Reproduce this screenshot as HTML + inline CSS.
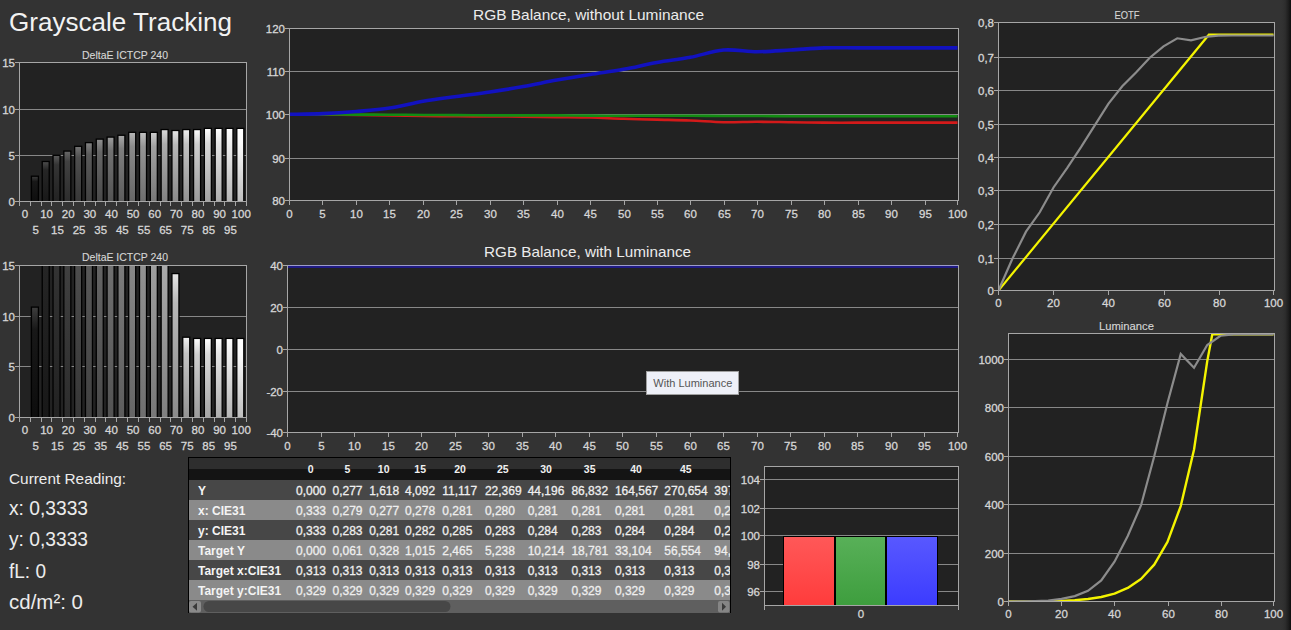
<!DOCTYPE html><html><head><meta charset="utf-8"><title>Grayscale Tracking</title><style>html,body{margin:0;padding:0;background:#333333;width:1291px;height:630px;overflow:hidden}svg{display:block}text{font-family:"Liberation Sans",sans-serif}</style></head><body>
<svg width="1291" height="630" viewBox="0 0 1291 630">
<defs>
<linearGradient id="edge" x1="0" x2="1" y1="0" y2="0"><stop offset="0" stop-color="#333333" stop-opacity="0"/><stop offset="0.5" stop-color="#2c2c2c"/><stop offset="0.8" stop-color="#1c1c1c"/><stop offset="1" stop-color="#0e0e0e"/></linearGradient>
<linearGradient id="gR" x1="0" x2="0" y1="0" y2="1"><stop offset="0" stop-color="#ff5858"/><stop offset="1" stop-color="#ff3c3c"/></linearGradient>
<linearGradient id="gG" x1="0" x2="0" y1="0" y2="1"><stop offset="0" stop-color="#58b058"/><stop offset="1" stop-color="#3e9e3e"/></linearGradient>
<linearGradient id="gB" x1="0" x2="0" y1="0" y2="1"><stop offset="0" stop-color="#5858ff"/><stop offset="1" stop-color="#3c3cff"/></linearGradient>
<linearGradient id="lv0" x1="0" x2="0" y1="0" y2="1"><stop offset="0" stop-color="rgb(45,45,45)"/><stop offset="0.2" stop-color="rgb(8,8,8)"/><stop offset="1" stop-color="rgb(0,0,0)"/></linearGradient>
<linearGradient id="lv5" x1="0" x2="0" y1="0" y2="1"><stop offset="0" stop-color="rgb(62,62,62)"/><stop offset="0.2" stop-color="rgb(24,24,24)"/><stop offset="1" stop-color="rgb(13,13,13)"/></linearGradient>
<linearGradient id="lv10" x1="0" x2="0" y1="0" y2="1"><stop offset="0" stop-color="rgb(77,77,77)"/><stop offset="0.2" stop-color="rgb(38,38,38)"/><stop offset="1" stop-color="rgb(24,24,24)"/></linearGradient>
<linearGradient id="lv15" x1="0" x2="0" y1="0" y2="1"><stop offset="0" stop-color="rgb(91,91,91)"/><stop offset="0.2" stop-color="rgb(52,52,52)"/><stop offset="1" stop-color="rgb(34,34,34)"/></linearGradient>
<linearGradient id="lv20" x1="0" x2="0" y1="0" y2="1"><stop offset="0" stop-color="rgb(105,105,105)"/><stop offset="0.2" stop-color="rgb(65,65,65)"/><stop offset="1" stop-color="rgb(44,44,44)"/></linearGradient>
<linearGradient id="lv25" x1="0" x2="0" y1="0" y2="1"><stop offset="0" stop-color="rgb(118,118,118)"/><stop offset="0.2" stop-color="rgb(78,78,78)"/><stop offset="1" stop-color="rgb(54,54,54)"/></linearGradient>
<linearGradient id="lv30" x1="0" x2="0" y1="0" y2="1"><stop offset="0" stop-color="rgb(131,131,131)"/><stop offset="0.2" stop-color="rgb(90,90,90)"/><stop offset="1" stop-color="rgb(64,64,64)"/></linearGradient>
<linearGradient id="lv35" x1="0" x2="0" y1="0" y2="1"><stop offset="0" stop-color="rgb(144,144,144)"/><stop offset="0.2" stop-color="rgb(102,102,102)"/><stop offset="1" stop-color="rgb(73,73,73)"/></linearGradient>
<linearGradient id="lv40" x1="0" x2="0" y1="0" y2="1"><stop offset="0" stop-color="rgb(157,157,157)"/><stop offset="0.2" stop-color="rgb(114,114,114)"/><stop offset="1" stop-color="rgb(83,83,83)"/></linearGradient>
<linearGradient id="lv45" x1="0" x2="0" y1="0" y2="1"><stop offset="0" stop-color="rgb(169,169,169)"/><stop offset="0.2" stop-color="rgb(126,126,126)"/><stop offset="1" stop-color="rgb(92,92,92)"/></linearGradient>
<linearGradient id="lv50" x1="0" x2="0" y1="0" y2="1"><stop offset="0" stop-color="rgb(182,182,182)"/><stop offset="0.2" stop-color="rgb(138,138,138)"/><stop offset="1" stop-color="rgb(101,101,101)"/></linearGradient>
<linearGradient id="lv55" x1="0" x2="0" y1="0" y2="1"><stop offset="0" stop-color="rgb(194,194,194)"/><stop offset="0.2" stop-color="rgb(149,149,149)"/><stop offset="1" stop-color="rgb(110,110,110)"/></linearGradient>
<linearGradient id="lv60" x1="0" x2="0" y1="0" y2="1"><stop offset="0" stop-color="rgb(206,206,206)"/><stop offset="0.2" stop-color="rgb(161,161,161)"/><stop offset="1" stop-color="rgb(119,119,119)"/></linearGradient>
<linearGradient id="lv65" x1="0" x2="0" y1="0" y2="1"><stop offset="0" stop-color="rgb(218,218,218)"/><stop offset="0.2" stop-color="rgb(172,172,172)"/><stop offset="1" stop-color="rgb(128,128,128)"/></linearGradient>
<linearGradient id="lv70" x1="0" x2="0" y1="0" y2="1"><stop offset="0" stop-color="rgb(230,230,230)"/><stop offset="0.2" stop-color="rgb(184,184,184)"/><stop offset="1" stop-color="rgb(137,137,137)"/></linearGradient>
<linearGradient id="lv75" x1="0" x2="0" y1="0" y2="1"><stop offset="0" stop-color="rgb(242,242,242)"/><stop offset="0.2" stop-color="rgb(195,195,195)"/><stop offset="1" stop-color="rgb(146,146,146)"/></linearGradient>
<linearGradient id="lv80" x1="0" x2="0" y1="0" y2="1"><stop offset="0" stop-color="rgb(254,254,254)"/><stop offset="0.2" stop-color="rgb(206,206,206)"/><stop offset="1" stop-color="rgb(154,154,154)"/></linearGradient>
<linearGradient id="lv85" x1="0" x2="0" y1="0" y2="1"><stop offset="0" stop-color="rgb(255,255,255)"/><stop offset="0.2" stop-color="rgb(217,217,217)"/><stop offset="1" stop-color="rgb(163,163,163)"/></linearGradient>
<linearGradient id="lv90" x1="0" x2="0" y1="0" y2="1"><stop offset="0" stop-color="rgb(255,255,255)"/><stop offset="0.2" stop-color="rgb(228,228,228)"/><stop offset="1" stop-color="rgb(172,172,172)"/></linearGradient>
<linearGradient id="lv95" x1="0" x2="0" y1="0" y2="1"><stop offset="0" stop-color="rgb(255,255,255)"/><stop offset="0.2" stop-color="rgb(239,239,239)"/><stop offset="1" stop-color="rgb(180,180,180)"/></linearGradient>
<linearGradient id="lv100" x1="0" x2="0" y1="0" y2="1"><stop offset="0" stop-color="rgb(255,255,255)"/><stop offset="0.2" stop-color="rgb(250,250,250)"/><stop offset="1" stop-color="rgb(189,189,189)"/></linearGradient>
</defs>
<rect x="0" y="0" width="1291" height="630" fill="#333333"/>
<rect x="1280" y="0" width="11" height="630" fill="url(#edge)"/>
<text x="9.00" y="31.00" font-size="26" text-anchor="start" fill="#f2f2f2" stroke="#f2f2f2" stroke-width="0.0" font-weight="normal" textLength="223" lengthAdjust="spacingAndGlyphs">Grayscale Tracking</text>
<rect x="19" y="62" width="228" height="140" fill="#222222"/>
<rect x="19" y="155" width="227" height="1" fill="#888888"/>
<rect x="19" y="109" width="227" height="1" fill="#888888"/>
<clipPath id="cd1"><rect x="20" y="63" width="226" height="138"/></clipPath>
<g clip-path="url(#cd1)">
<rect x="31.41" y="176.20" width="7.0" height="26.80" fill="url(#lv5)" stroke="#000" stroke-width="1.3"/>
<rect x="42.22" y="161.48" width="7.0" height="41.52" fill="url(#lv10)" stroke="#000" stroke-width="1.3"/>
<rect x="53.03" y="155.32" width="7.0" height="47.68" fill="url(#lv15)" stroke="#000" stroke-width="1.3"/>
<rect x="63.84" y="151.08" width="7.0" height="51.92" fill="url(#lv20)" stroke="#000" stroke-width="1.3"/>
<rect x="74.65" y="146.30" width="7.0" height="56.70" fill="url(#lv25)" stroke="#000" stroke-width="1.3"/>
<rect x="85.46" y="142.62" width="7.0" height="60.38" fill="url(#lv30)" stroke="#000" stroke-width="1.3"/>
<rect x="96.27" y="139.12" width="7.0" height="63.88" fill="url(#lv35)" stroke="#000" stroke-width="1.3"/>
<rect x="107.08" y="137.10" width="7.0" height="65.90" fill="url(#lv40)" stroke="#000" stroke-width="1.3"/>
<rect x="117.89" y="135.26" width="7.0" height="67.74" fill="url(#lv45)" stroke="#000" stroke-width="1.3"/>
<rect x="128.70" y="132.32" width="7.0" height="70.68" fill="url(#lv50)" stroke="#000" stroke-width="1.3"/>
<rect x="139.51" y="132.32" width="7.0" height="70.68" fill="url(#lv55)" stroke="#000" stroke-width="1.3"/>
<rect x="150.32" y="132.32" width="7.0" height="70.68" fill="url(#lv60)" stroke="#000" stroke-width="1.3"/>
<rect x="161.13" y="129.56" width="7.0" height="73.44" fill="url(#lv65)" stroke="#000" stroke-width="1.3"/>
<rect x="171.94" y="130.48" width="7.0" height="72.52" fill="url(#lv70)" stroke="#000" stroke-width="1.3"/>
<rect x="182.75" y="129.56" width="7.0" height="73.44" fill="url(#lv75)" stroke="#000" stroke-width="1.3"/>
<rect x="193.56" y="129.56" width="7.0" height="73.44" fill="url(#lv80)" stroke="#000" stroke-width="1.3"/>
<rect x="204.37" y="128.36" width="7.0" height="74.64" fill="url(#lv85)" stroke="#000" stroke-width="1.3"/>
<rect x="215.18" y="128.36" width="7.0" height="74.64" fill="url(#lv90)" stroke="#000" stroke-width="1.3"/>
<rect x="225.99" y="128.36" width="7.0" height="74.64" fill="url(#lv95)" stroke="#000" stroke-width="1.3"/>
<rect x="236.80" y="128.36" width="7.0" height="74.64" fill="url(#lv100)" stroke="#000" stroke-width="1.3"/>
</g>
<rect x="19" y="62" width="228" height="1" fill="#a6a6a6"/>
<rect x="19" y="201" width="228" height="1" fill="#a6a6a6"/>
<rect x="19" y="62" width="1" height="140" fill="#a6a6a6"/>
<rect x="246" y="62" width="1" height="140" fill="#a6a6a6"/>
<rect x="15" y="201" width="4" height="1" fill="#a6a6a6"/>
<text x="15.00" y="205.80" font-size="11.5" text-anchor="end" fill="#d6d6d6" stroke="#d6d6d6" stroke-width="0.3" font-weight="normal" >0</text>
<rect x="15" y="155" width="4" height="1" fill="#a6a6a6"/>
<text x="15.00" y="159.80" font-size="11.5" text-anchor="end" fill="#d6d6d6" stroke="#d6d6d6" stroke-width="0.3" font-weight="normal" >5</text>
<rect x="15" y="109" width="4" height="1" fill="#a6a6a6"/>
<text x="15.00" y="113.80" font-size="11.5" text-anchor="end" fill="#d6d6d6" stroke="#d6d6d6" stroke-width="0.3" font-weight="normal" >10</text>
<rect x="15" y="62" width="4" height="1" fill="#a6a6a6"/>
<text x="15.00" y="66.80" font-size="11.5" text-anchor="end" fill="#d6d6d6" stroke="#d6d6d6" stroke-width="0.3" font-weight="normal" >15</text>
<rect x="19" y="201" width="1" height="5" fill="#a6a6a6"/>
<rect x="30" y="201" width="1" height="5" fill="#a6a6a6"/>
<rect x="41" y="201" width="1" height="5" fill="#a6a6a6"/>
<rect x="51" y="201" width="1" height="5" fill="#a6a6a6"/>
<rect x="62" y="201" width="1" height="5" fill="#a6a6a6"/>
<rect x="73" y="201" width="1" height="5" fill="#a6a6a6"/>
<rect x="84" y="201" width="1" height="5" fill="#a6a6a6"/>
<rect x="95" y="201" width="1" height="5" fill="#a6a6a6"/>
<rect x="105" y="201" width="1" height="5" fill="#a6a6a6"/>
<rect x="116" y="201" width="1" height="5" fill="#a6a6a6"/>
<rect x="127" y="201" width="1" height="5" fill="#a6a6a6"/>
<rect x="138" y="201" width="1" height="5" fill="#a6a6a6"/>
<rect x="149" y="201" width="1" height="5" fill="#a6a6a6"/>
<rect x="160" y="201" width="1" height="5" fill="#a6a6a6"/>
<rect x="170" y="201" width="1" height="5" fill="#a6a6a6"/>
<rect x="181" y="201" width="1" height="5" fill="#a6a6a6"/>
<rect x="192" y="201" width="1" height="5" fill="#a6a6a6"/>
<rect x="203" y="201" width="1" height="5" fill="#a6a6a6"/>
<rect x="214" y="201" width="1" height="5" fill="#a6a6a6"/>
<rect x="224" y="201" width="1" height="5" fill="#a6a6a6"/>
<rect x="235" y="201" width="1" height="5" fill="#a6a6a6"/>
<rect x="246" y="201" width="1" height="5" fill="#a6a6a6"/>
<text x="25.00" y="218.00" font-size="11.5" text-anchor="middle" fill="#d6d6d6" stroke="#d6d6d6" stroke-width="0.3" font-weight="normal" >0</text>
<text x="35.81" y="234.00" font-size="11.5" text-anchor="middle" fill="#d6d6d6" stroke="#d6d6d6" stroke-width="0.3" font-weight="normal" >5</text>
<text x="46.62" y="218.00" font-size="11.5" text-anchor="middle" fill="#d6d6d6" stroke="#d6d6d6" stroke-width="0.3" font-weight="normal" >10</text>
<text x="57.43" y="234.00" font-size="11.5" text-anchor="middle" fill="#d6d6d6" stroke="#d6d6d6" stroke-width="0.3" font-weight="normal" >15</text>
<text x="68.24" y="218.00" font-size="11.5" text-anchor="middle" fill="#d6d6d6" stroke="#d6d6d6" stroke-width="0.3" font-weight="normal" >20</text>
<text x="79.05" y="234.00" font-size="11.5" text-anchor="middle" fill="#d6d6d6" stroke="#d6d6d6" stroke-width="0.3" font-weight="normal" >25</text>
<text x="89.86" y="218.00" font-size="11.5" text-anchor="middle" fill="#d6d6d6" stroke="#d6d6d6" stroke-width="0.3" font-weight="normal" >30</text>
<text x="100.67" y="234.00" font-size="11.5" text-anchor="middle" fill="#d6d6d6" stroke="#d6d6d6" stroke-width="0.3" font-weight="normal" >35</text>
<text x="111.48" y="218.00" font-size="11.5" text-anchor="middle" fill="#d6d6d6" stroke="#d6d6d6" stroke-width="0.3" font-weight="normal" >40</text>
<text x="122.29" y="234.00" font-size="11.5" text-anchor="middle" fill="#d6d6d6" stroke="#d6d6d6" stroke-width="0.3" font-weight="normal" >45</text>
<text x="133.10" y="218.00" font-size="11.5" text-anchor="middle" fill="#d6d6d6" stroke="#d6d6d6" stroke-width="0.3" font-weight="normal" >50</text>
<text x="143.91" y="234.00" font-size="11.5" text-anchor="middle" fill="#d6d6d6" stroke="#d6d6d6" stroke-width="0.3" font-weight="normal" >55</text>
<text x="154.72" y="218.00" font-size="11.5" text-anchor="middle" fill="#d6d6d6" stroke="#d6d6d6" stroke-width="0.3" font-weight="normal" >60</text>
<text x="165.53" y="234.00" font-size="11.5" text-anchor="middle" fill="#d6d6d6" stroke="#d6d6d6" stroke-width="0.3" font-weight="normal" >65</text>
<text x="176.34" y="218.00" font-size="11.5" text-anchor="middle" fill="#d6d6d6" stroke="#d6d6d6" stroke-width="0.3" font-weight="normal" >70</text>
<text x="187.15" y="234.00" font-size="11.5" text-anchor="middle" fill="#d6d6d6" stroke="#d6d6d6" stroke-width="0.3" font-weight="normal" >75</text>
<text x="197.96" y="218.00" font-size="11.5" text-anchor="middle" fill="#d6d6d6" stroke="#d6d6d6" stroke-width="0.3" font-weight="normal" >80</text>
<text x="208.77" y="234.00" font-size="11.5" text-anchor="middle" fill="#d6d6d6" stroke="#d6d6d6" stroke-width="0.3" font-weight="normal" >85</text>
<text x="219.58" y="218.00" font-size="11.5" text-anchor="middle" fill="#d6d6d6" stroke="#d6d6d6" stroke-width="0.3" font-weight="normal" >90</text>
<text x="230.39" y="234.00" font-size="11.5" text-anchor="middle" fill="#d6d6d6" stroke="#d6d6d6" stroke-width="0.3" font-weight="normal" >95</text>
<text x="241.20" y="218.00" font-size="11.5" text-anchor="middle" fill="#d6d6d6" stroke="#d6d6d6" stroke-width="0.3" font-weight="normal" >100</text>
<text x="125.00" y="59.00" font-size="11" text-anchor="middle" fill="#d6d6d6" stroke="#d6d6d6" stroke-width="0.12" font-weight="normal" textLength="86" lengthAdjust="spacingAndGlyphs">DeltaE ICTCP 240</text>
<rect x="19" y="265" width="228" height="153" fill="#222222"/>
<rect x="19" y="366" width="227" height="1" fill="#888888"/>
<rect x="19" y="316" width="227" height="1" fill="#888888"/>
<clipPath id="cd2"><rect x="20" y="266" width="226" height="151"/></clipPath>
<g clip-path="url(#cd2)">
<rect x="31.41" y="307.11" width="7.0" height="111.89" fill="url(#lv5)" stroke="#000" stroke-width="1.3"/>
<rect x="42.22" y="215.50" width="7.0" height="203.50" fill="url(#lv10)" stroke="#000" stroke-width="1.3"/>
<rect x="53.03" y="215.50" width="7.0" height="203.50" fill="url(#lv15)" stroke="#000" stroke-width="1.3"/>
<rect x="63.84" y="215.50" width="7.0" height="203.50" fill="url(#lv20)" stroke="#000" stroke-width="1.3"/>
<rect x="74.65" y="215.50" width="7.0" height="203.50" fill="url(#lv25)" stroke="#000" stroke-width="1.3"/>
<rect x="85.46" y="215.50" width="7.0" height="203.50" fill="url(#lv30)" stroke="#000" stroke-width="1.3"/>
<rect x="96.27" y="215.50" width="7.0" height="203.50" fill="url(#lv35)" stroke="#000" stroke-width="1.3"/>
<rect x="107.08" y="215.50" width="7.0" height="203.50" fill="url(#lv40)" stroke="#000" stroke-width="1.3"/>
<rect x="117.89" y="215.50" width="7.0" height="203.50" fill="url(#lv45)" stroke="#000" stroke-width="1.3"/>
<rect x="128.70" y="215.50" width="7.0" height="203.50" fill="url(#lv50)" stroke="#000" stroke-width="1.3"/>
<rect x="139.51" y="215.50" width="7.0" height="203.50" fill="url(#lv55)" stroke="#000" stroke-width="1.3"/>
<rect x="150.32" y="215.50" width="7.0" height="203.50" fill="url(#lv60)" stroke="#000" stroke-width="1.3"/>
<rect x="161.13" y="215.50" width="7.0" height="203.50" fill="url(#lv65)" stroke="#000" stroke-width="1.3"/>
<rect x="171.94" y="273.58" width="7.0" height="145.42" fill="url(#lv70)" stroke="#000" stroke-width="1.3"/>
<rect x="182.75" y="337.20" width="7.0" height="81.80" fill="url(#lv75)" stroke="#000" stroke-width="1.3"/>
<rect x="193.56" y="338.42" width="7.0" height="80.58" fill="url(#lv80)" stroke="#000" stroke-width="1.3"/>
<rect x="204.37" y="338.42" width="7.0" height="80.58" fill="url(#lv85)" stroke="#000" stroke-width="1.3"/>
<rect x="215.18" y="338.42" width="7.0" height="80.58" fill="url(#lv90)" stroke="#000" stroke-width="1.3"/>
<rect x="225.99" y="338.42" width="7.0" height="80.58" fill="url(#lv95)" stroke="#000" stroke-width="1.3"/>
<rect x="236.80" y="338.42" width="7.0" height="80.58" fill="url(#lv100)" stroke="#000" stroke-width="1.3"/>
</g>
<rect x="19" y="265" width="228" height="1" fill="#a6a6a6"/>
<rect x="19" y="417" width="228" height="1" fill="#a6a6a6"/>
<rect x="19" y="265" width="1" height="153" fill="#a6a6a6"/>
<rect x="246" y="265" width="1" height="153" fill="#a6a6a6"/>
<rect x="15" y="417" width="4" height="1" fill="#a6a6a6"/>
<text x="15.00" y="421.80" font-size="11.5" text-anchor="end" fill="#d6d6d6" stroke="#d6d6d6" stroke-width="0.3" font-weight="normal" >0</text>
<rect x="15" y="366" width="4" height="1" fill="#a6a6a6"/>
<text x="15.00" y="370.80" font-size="11.5" text-anchor="end" fill="#d6d6d6" stroke="#d6d6d6" stroke-width="0.3" font-weight="normal" >5</text>
<rect x="15" y="316" width="4" height="1" fill="#a6a6a6"/>
<text x="15.00" y="320.80" font-size="11.5" text-anchor="end" fill="#d6d6d6" stroke="#d6d6d6" stroke-width="0.3" font-weight="normal" >10</text>
<rect x="15" y="265" width="4" height="1" fill="#a6a6a6"/>
<text x="15.00" y="269.80" font-size="11.5" text-anchor="end" fill="#d6d6d6" stroke="#d6d6d6" stroke-width="0.3" font-weight="normal" >15</text>
<rect x="19" y="417" width="1" height="5" fill="#a6a6a6"/>
<rect x="30" y="417" width="1" height="5" fill="#a6a6a6"/>
<rect x="41" y="417" width="1" height="5" fill="#a6a6a6"/>
<rect x="51" y="417" width="1" height="5" fill="#a6a6a6"/>
<rect x="62" y="417" width="1" height="5" fill="#a6a6a6"/>
<rect x="73" y="417" width="1" height="5" fill="#a6a6a6"/>
<rect x="84" y="417" width="1" height="5" fill="#a6a6a6"/>
<rect x="95" y="417" width="1" height="5" fill="#a6a6a6"/>
<rect x="105" y="417" width="1" height="5" fill="#a6a6a6"/>
<rect x="116" y="417" width="1" height="5" fill="#a6a6a6"/>
<rect x="127" y="417" width="1" height="5" fill="#a6a6a6"/>
<rect x="138" y="417" width="1" height="5" fill="#a6a6a6"/>
<rect x="149" y="417" width="1" height="5" fill="#a6a6a6"/>
<rect x="160" y="417" width="1" height="5" fill="#a6a6a6"/>
<rect x="170" y="417" width="1" height="5" fill="#a6a6a6"/>
<rect x="181" y="417" width="1" height="5" fill="#a6a6a6"/>
<rect x="192" y="417" width="1" height="5" fill="#a6a6a6"/>
<rect x="203" y="417" width="1" height="5" fill="#a6a6a6"/>
<rect x="214" y="417" width="1" height="5" fill="#a6a6a6"/>
<rect x="224" y="417" width="1" height="5" fill="#a6a6a6"/>
<rect x="235" y="417" width="1" height="5" fill="#a6a6a6"/>
<rect x="246" y="417" width="1" height="5" fill="#a6a6a6"/>
<text x="25.00" y="434.00" font-size="11.5" text-anchor="middle" fill="#d6d6d6" stroke="#d6d6d6" stroke-width="0.3" font-weight="normal" >0</text>
<text x="35.81" y="450.00" font-size="11.5" text-anchor="middle" fill="#d6d6d6" stroke="#d6d6d6" stroke-width="0.3" font-weight="normal" >5</text>
<text x="46.62" y="434.00" font-size="11.5" text-anchor="middle" fill="#d6d6d6" stroke="#d6d6d6" stroke-width="0.3" font-weight="normal" >10</text>
<text x="57.43" y="450.00" font-size="11.5" text-anchor="middle" fill="#d6d6d6" stroke="#d6d6d6" stroke-width="0.3" font-weight="normal" >15</text>
<text x="68.24" y="434.00" font-size="11.5" text-anchor="middle" fill="#d6d6d6" stroke="#d6d6d6" stroke-width="0.3" font-weight="normal" >20</text>
<text x="79.05" y="450.00" font-size="11.5" text-anchor="middle" fill="#d6d6d6" stroke="#d6d6d6" stroke-width="0.3" font-weight="normal" >25</text>
<text x="89.86" y="434.00" font-size="11.5" text-anchor="middle" fill="#d6d6d6" stroke="#d6d6d6" stroke-width="0.3" font-weight="normal" >30</text>
<text x="100.67" y="450.00" font-size="11.5" text-anchor="middle" fill="#d6d6d6" stroke="#d6d6d6" stroke-width="0.3" font-weight="normal" >35</text>
<text x="111.48" y="434.00" font-size="11.5" text-anchor="middle" fill="#d6d6d6" stroke="#d6d6d6" stroke-width="0.3" font-weight="normal" >40</text>
<text x="122.29" y="450.00" font-size="11.5" text-anchor="middle" fill="#d6d6d6" stroke="#d6d6d6" stroke-width="0.3" font-weight="normal" >45</text>
<text x="133.10" y="434.00" font-size="11.5" text-anchor="middle" fill="#d6d6d6" stroke="#d6d6d6" stroke-width="0.3" font-weight="normal" >50</text>
<text x="143.91" y="450.00" font-size="11.5" text-anchor="middle" fill="#d6d6d6" stroke="#d6d6d6" stroke-width="0.3" font-weight="normal" >55</text>
<text x="154.72" y="434.00" font-size="11.5" text-anchor="middle" fill="#d6d6d6" stroke="#d6d6d6" stroke-width="0.3" font-weight="normal" >60</text>
<text x="165.53" y="450.00" font-size="11.5" text-anchor="middle" fill="#d6d6d6" stroke="#d6d6d6" stroke-width="0.3" font-weight="normal" >65</text>
<text x="176.34" y="434.00" font-size="11.5" text-anchor="middle" fill="#d6d6d6" stroke="#d6d6d6" stroke-width="0.3" font-weight="normal" >70</text>
<text x="187.15" y="450.00" font-size="11.5" text-anchor="middle" fill="#d6d6d6" stroke="#d6d6d6" stroke-width="0.3" font-weight="normal" >75</text>
<text x="197.96" y="434.00" font-size="11.5" text-anchor="middle" fill="#d6d6d6" stroke="#d6d6d6" stroke-width="0.3" font-weight="normal" >80</text>
<text x="208.77" y="450.00" font-size="11.5" text-anchor="middle" fill="#d6d6d6" stroke="#d6d6d6" stroke-width="0.3" font-weight="normal" >85</text>
<text x="219.58" y="434.00" font-size="11.5" text-anchor="middle" fill="#d6d6d6" stroke="#d6d6d6" stroke-width="0.3" font-weight="normal" >90</text>
<text x="230.39" y="450.00" font-size="11.5" text-anchor="middle" fill="#d6d6d6" stroke="#d6d6d6" stroke-width="0.3" font-weight="normal" >95</text>
<text x="241.20" y="434.00" font-size="11.5" text-anchor="middle" fill="#d6d6d6" stroke="#d6d6d6" stroke-width="0.3" font-weight="normal" >100</text>
<text x="125.00" y="261.20" font-size="11" text-anchor="middle" fill="#d6d6d6" stroke="#d6d6d6" stroke-width="0.12" font-weight="normal" textLength="86" lengthAdjust="spacingAndGlyphs">DeltaE ICTCP 240</text>
<rect x="289" y="28" width="670" height="173" fill="#222222"/>
<rect x="289" y="158" width="669" height="1" fill="#888888"/>
<rect x="289" y="114" width="669" height="1" fill="#888888"/>
<rect x="289" y="71" width="669" height="1" fill="#888888"/>
<clipPath id="c1"><rect x="290" y="29" width="668" height="171"/></clipPath>
<g clip-path="url(#c1)">
<path d="M289.50,114.50 C295.07,114.54 311.77,114.64 322.90,114.71 C334.03,114.79 345.17,114.82 356.30,114.93 C367.43,115.04 378.57,115.18 389.70,115.36 C400.83,115.54 411.97,115.86 423.10,116.00 C434.23,116.15 445.37,116.15 456.50,116.22 C467.63,116.29 478.77,116.36 489.90,116.44 C501.03,116.51 512.17,116.54 523.30,116.65 C534.43,116.76 545.57,116.94 556.70,117.08 C567.83,117.22 578.97,117.22 590.10,117.51 C601.23,117.80 612.37,118.44 623.50,118.80 C634.63,119.16 645.77,119.37 656.90,119.66 C668.03,119.95 679.17,120.09 690.30,120.52 C701.43,120.95 712.57,122.02 723.70,122.24 C734.83,122.45 745.97,121.81 757.10,121.81 C768.23,121.81 779.37,122.10 790.50,122.24 C801.63,122.38 812.77,122.60 823.90,122.67 C835.03,122.74 846.17,122.67 857.30,122.67 C868.43,122.67 879.57,122.67 890.70,122.67 C901.83,122.67 912.97,122.67 924.10,122.67 C935.23,122.67 951.93,122.67 957.50,122.67" fill="none" stroke="#d41a1a" stroke-width="2.6"/>
<path d="M289.50,114.50 C295.07,114.50 311.77,114.49 322.90,114.50 C334.03,114.51 345.17,114.55 356.30,114.59 C367.43,114.62 378.57,114.66 389.70,114.71 C400.83,114.77 411.97,114.86 423.10,114.93 C434.23,115.00 445.37,115.07 456.50,115.15 C467.63,115.22 478.77,115.32 489.90,115.36 C501.03,115.40 512.17,115.36 523.30,115.36 C534.43,115.36 545.57,115.32 556.70,115.36 C567.83,115.40 578.97,115.50 590.10,115.58 C601.23,115.65 612.37,115.75 623.50,115.79 C634.63,115.83 645.77,115.79 656.90,115.79 C668.03,115.79 679.17,115.75 690.30,115.79 C701.43,115.83 712.57,115.97 723.70,116.00 C734.83,116.04 745.97,115.97 757.10,116.00 C768.23,116.04 779.37,116.18 790.50,116.22 C801.63,116.26 812.77,116.22 823.90,116.22 C835.03,116.22 846.17,116.22 857.30,116.22 C868.43,116.22 879.57,116.22 890.70,116.22 C901.83,116.22 912.97,116.22 924.10,116.22 C935.23,116.22 951.93,116.22 957.50,116.22" fill="none" stroke="#128c12" stroke-width="2.6"/>
<path d="M289.50,114.29 C295.07,114.18 311.77,114.11 322.90,113.64 C334.03,113.17 345.17,112.42 356.30,111.49 C367.43,110.56 378.57,109.77 389.70,108.05 C400.83,106.33 411.97,103.11 423.10,101.17 C434.23,99.24 445.37,97.98 456.50,96.44 C467.63,94.90 478.77,93.57 489.90,91.92 C501.03,90.28 512.17,88.52 523.30,86.55 C534.43,84.58 545.57,82.11 556.70,80.10 C567.83,78.09 578.97,76.30 590.10,74.51 C601.23,72.72 612.37,71.36 623.50,69.35 C634.63,67.34 645.77,64.48 656.90,62.47 C668.03,60.46 679.17,59.39 690.30,57.31 C701.43,55.23 712.57,50.93 723.70,50.00 C734.83,49.07 745.97,51.72 757.10,51.72 C768.23,51.72 779.37,50.65 790.50,50.00 C801.63,49.35 812.77,48.21 823.90,47.85 C835.03,47.49 846.17,47.85 857.30,47.85 C868.43,47.85 879.57,47.85 890.70,47.85 C901.83,47.85 912.97,47.85 924.10,47.85 C935.23,47.85 951.93,47.85 957.50,47.85" fill="none" stroke="#1212c0" stroke-width="3.6"/>
</g>
<rect x="289" y="28" width="670" height="1" fill="#a6a6a6"/>
<rect x="289" y="200" width="670" height="1" fill="#a6a6a6"/>
<rect x="289" y="28" width="1" height="173" fill="#a6a6a6"/>
<rect x="958" y="28" width="1" height="173" fill="#a6a6a6"/>
<rect x="285" y="200" width="4" height="1" fill="#a6a6a6"/>
<text x="285.00" y="204.80" font-size="11.5" text-anchor="end" fill="#d6d6d6" stroke="#d6d6d6" stroke-width="0.3" font-weight="normal" >80</text>
<rect x="285" y="158" width="4" height="1" fill="#a6a6a6"/>
<text x="285.00" y="162.80" font-size="11.5" text-anchor="end" fill="#d6d6d6" stroke="#d6d6d6" stroke-width="0.3" font-weight="normal" >90</text>
<rect x="285" y="114" width="4" height="1" fill="#a6a6a6"/>
<text x="285.00" y="118.80" font-size="11.5" text-anchor="end" fill="#d6d6d6" stroke="#d6d6d6" stroke-width="0.3" font-weight="normal" >100</text>
<rect x="285" y="71" width="4" height="1" fill="#a6a6a6"/>
<text x="285.00" y="75.80" font-size="11.5" text-anchor="end" fill="#d6d6d6" stroke="#d6d6d6" stroke-width="0.3" font-weight="normal" >110</text>
<rect x="285" y="28" width="4" height="1" fill="#a6a6a6"/>
<text x="285.00" y="32.80" font-size="11.5" text-anchor="end" fill="#d6d6d6" stroke="#d6d6d6" stroke-width="0.3" font-weight="normal" >120</text>
<rect x="289" y="200" width="1" height="5" fill="#a6a6a6"/>
<text x="289.50" y="217.60" font-size="11.5" text-anchor="middle" fill="#d6d6d6" stroke="#d6d6d6" stroke-width="0.3" font-weight="normal" >0</text>
<rect x="322" y="200" width="1" height="5" fill="#a6a6a6"/>
<text x="322.50" y="217.60" font-size="11.5" text-anchor="middle" fill="#d6d6d6" stroke="#d6d6d6" stroke-width="0.3" font-weight="normal" >5</text>
<rect x="356" y="200" width="1" height="5" fill="#a6a6a6"/>
<text x="356.50" y="217.60" font-size="11.5" text-anchor="middle" fill="#d6d6d6" stroke="#d6d6d6" stroke-width="0.3" font-weight="normal" >10</text>
<rect x="389" y="200" width="1" height="5" fill="#a6a6a6"/>
<text x="389.50" y="217.60" font-size="11.5" text-anchor="middle" fill="#d6d6d6" stroke="#d6d6d6" stroke-width="0.3" font-weight="normal" >15</text>
<rect x="423" y="200" width="1" height="5" fill="#a6a6a6"/>
<text x="423.50" y="217.60" font-size="11.5" text-anchor="middle" fill="#d6d6d6" stroke="#d6d6d6" stroke-width="0.3" font-weight="normal" >20</text>
<rect x="456" y="200" width="1" height="5" fill="#a6a6a6"/>
<text x="456.50" y="217.60" font-size="11.5" text-anchor="middle" fill="#d6d6d6" stroke="#d6d6d6" stroke-width="0.3" font-weight="normal" >25</text>
<rect x="490" y="200" width="1" height="5" fill="#a6a6a6"/>
<text x="490.50" y="217.60" font-size="11.5" text-anchor="middle" fill="#d6d6d6" stroke="#d6d6d6" stroke-width="0.3" font-weight="normal" >30</text>
<rect x="523" y="200" width="1" height="5" fill="#a6a6a6"/>
<text x="523.50" y="217.60" font-size="11.5" text-anchor="middle" fill="#d6d6d6" stroke="#d6d6d6" stroke-width="0.3" font-weight="normal" >35</text>
<rect x="557" y="200" width="1" height="5" fill="#a6a6a6"/>
<text x="557.50" y="217.60" font-size="11.5" text-anchor="middle" fill="#d6d6d6" stroke="#d6d6d6" stroke-width="0.3" font-weight="normal" >40</text>
<rect x="590" y="200" width="1" height="5" fill="#a6a6a6"/>
<text x="590.50" y="217.60" font-size="11.5" text-anchor="middle" fill="#d6d6d6" stroke="#d6d6d6" stroke-width="0.3" font-weight="normal" >45</text>
<rect x="624" y="200" width="1" height="5" fill="#a6a6a6"/>
<text x="624.50" y="217.60" font-size="11.5" text-anchor="middle" fill="#d6d6d6" stroke="#d6d6d6" stroke-width="0.3" font-weight="normal" >50</text>
<rect x="657" y="200" width="1" height="5" fill="#a6a6a6"/>
<text x="657.50" y="217.60" font-size="11.5" text-anchor="middle" fill="#d6d6d6" stroke="#d6d6d6" stroke-width="0.3" font-weight="normal" >55</text>
<rect x="690" y="200" width="1" height="5" fill="#a6a6a6"/>
<text x="690.50" y="217.60" font-size="11.5" text-anchor="middle" fill="#d6d6d6" stroke="#d6d6d6" stroke-width="0.3" font-weight="normal" >60</text>
<rect x="724" y="200" width="1" height="5" fill="#a6a6a6"/>
<text x="724.50" y="217.60" font-size="11.5" text-anchor="middle" fill="#d6d6d6" stroke="#d6d6d6" stroke-width="0.3" font-weight="normal" >65</text>
<rect x="757" y="200" width="1" height="5" fill="#a6a6a6"/>
<text x="757.50" y="217.60" font-size="11.5" text-anchor="middle" fill="#d6d6d6" stroke="#d6d6d6" stroke-width="0.3" font-weight="normal" >70</text>
<rect x="791" y="200" width="1" height="5" fill="#a6a6a6"/>
<text x="791.50" y="217.60" font-size="11.5" text-anchor="middle" fill="#d6d6d6" stroke="#d6d6d6" stroke-width="0.3" font-weight="normal" >75</text>
<rect x="824" y="200" width="1" height="5" fill="#a6a6a6"/>
<text x="824.50" y="217.60" font-size="11.5" text-anchor="middle" fill="#d6d6d6" stroke="#d6d6d6" stroke-width="0.3" font-weight="normal" >80</text>
<rect x="858" y="200" width="1" height="5" fill="#a6a6a6"/>
<text x="858.50" y="217.60" font-size="11.5" text-anchor="middle" fill="#d6d6d6" stroke="#d6d6d6" stroke-width="0.3" font-weight="normal" >85</text>
<rect x="891" y="200" width="1" height="5" fill="#a6a6a6"/>
<text x="891.50" y="217.60" font-size="11.5" text-anchor="middle" fill="#d6d6d6" stroke="#d6d6d6" stroke-width="0.3" font-weight="normal" >90</text>
<rect x="925" y="200" width="1" height="5" fill="#a6a6a6"/>
<text x="925.50" y="217.60" font-size="11.5" text-anchor="middle" fill="#d6d6d6" stroke="#d6d6d6" stroke-width="0.3" font-weight="normal" >95</text>
<rect x="957" y="200" width="1" height="5" fill="#a6a6a6"/>
<text x="957.50" y="217.60" font-size="11.5" text-anchor="middle" fill="#d6d6d6" stroke="#d6d6d6" stroke-width="0.3" font-weight="normal" >100</text>
<text x="588.50" y="20.00" font-size="15" text-anchor="middle" fill="#ececec" stroke="#ececec" stroke-width="0.0" font-weight="normal" textLength="231" lengthAdjust="spacingAndGlyphs">RGB Balance, without Luminance</text>
<rect x="287" y="265" width="672" height="168" fill="#222222"/>
<rect x="287" y="391" width="671" height="1" fill="#888888"/>
<rect x="287" y="349" width="671" height="1" fill="#888888"/>
<rect x="287" y="307" width="671" height="1" fill="#888888"/>
<rect x="288" y="266" width="670" height="2" fill="#1f1a84"/>
<rect x="287" y="265" width="672" height="1" fill="#a6a6a6"/>
<rect x="287" y="432" width="672" height="1" fill="#a6a6a6"/>
<rect x="287" y="265" width="1" height="168" fill="#a6a6a6"/>
<rect x="958" y="265" width="1" height="168" fill="#a6a6a6"/>
<rect x="283" y="432" width="4" height="1" fill="#a6a6a6"/>
<text x="283.00" y="436.80" font-size="11.5" text-anchor="end" fill="#d6d6d6" stroke="#d6d6d6" stroke-width="0.3" font-weight="normal" >-40</text>
<rect x="283" y="391" width="4" height="1" fill="#a6a6a6"/>
<text x="283.00" y="395.80" font-size="11.5" text-anchor="end" fill="#d6d6d6" stroke="#d6d6d6" stroke-width="0.3" font-weight="normal" >-20</text>
<rect x="283" y="349" width="4" height="1" fill="#a6a6a6"/>
<text x="283.00" y="353.80" font-size="11.5" text-anchor="end" fill="#d6d6d6" stroke="#d6d6d6" stroke-width="0.3" font-weight="normal" >0</text>
<rect x="283" y="307" width="4" height="1" fill="#a6a6a6"/>
<text x="283.00" y="311.80" font-size="11.5" text-anchor="end" fill="#d6d6d6" stroke="#d6d6d6" stroke-width="0.3" font-weight="normal" >20</text>
<rect x="283" y="265" width="4" height="1" fill="#a6a6a6"/>
<text x="283.00" y="269.80" font-size="11.5" text-anchor="end" fill="#d6d6d6" stroke="#d6d6d6" stroke-width="0.3" font-weight="normal" >40</text>
<rect x="287" y="432" width="1" height="5" fill="#a6a6a6"/>
<text x="287.50" y="449.60" font-size="11.5" text-anchor="middle" fill="#d6d6d6" stroke="#d6d6d6" stroke-width="0.3" font-weight="normal" >0</text>
<rect x="321" y="432" width="1" height="5" fill="#a6a6a6"/>
<text x="321.50" y="449.60" font-size="11.5" text-anchor="middle" fill="#d6d6d6" stroke="#d6d6d6" stroke-width="0.3" font-weight="normal" >5</text>
<rect x="354" y="432" width="1" height="5" fill="#a6a6a6"/>
<text x="354.50" y="449.60" font-size="11.5" text-anchor="middle" fill="#d6d6d6" stroke="#d6d6d6" stroke-width="0.3" font-weight="normal" >10</text>
<rect x="388" y="432" width="1" height="5" fill="#a6a6a6"/>
<text x="388.50" y="449.60" font-size="11.5" text-anchor="middle" fill="#d6d6d6" stroke="#d6d6d6" stroke-width="0.3" font-weight="normal" >15</text>
<rect x="421" y="432" width="1" height="5" fill="#a6a6a6"/>
<text x="421.50" y="449.60" font-size="11.5" text-anchor="middle" fill="#d6d6d6" stroke="#d6d6d6" stroke-width="0.3" font-weight="normal" >20</text>
<rect x="455" y="432" width="1" height="5" fill="#a6a6a6"/>
<text x="455.50" y="449.60" font-size="11.5" text-anchor="middle" fill="#d6d6d6" stroke="#d6d6d6" stroke-width="0.3" font-weight="normal" >25</text>
<rect x="488" y="432" width="1" height="5" fill="#a6a6a6"/>
<text x="488.50" y="449.60" font-size="11.5" text-anchor="middle" fill="#d6d6d6" stroke="#d6d6d6" stroke-width="0.3" font-weight="normal" >30</text>
<rect x="522" y="432" width="1" height="5" fill="#a6a6a6"/>
<text x="522.50" y="449.60" font-size="11.5" text-anchor="middle" fill="#d6d6d6" stroke="#d6d6d6" stroke-width="0.3" font-weight="normal" >35</text>
<rect x="555" y="432" width="1" height="5" fill="#a6a6a6"/>
<text x="555.50" y="449.60" font-size="11.5" text-anchor="middle" fill="#d6d6d6" stroke="#d6d6d6" stroke-width="0.3" font-weight="normal" >40</text>
<rect x="589" y="432" width="1" height="5" fill="#a6a6a6"/>
<text x="589.50" y="449.60" font-size="11.5" text-anchor="middle" fill="#d6d6d6" stroke="#d6d6d6" stroke-width="0.3" font-weight="normal" >45</text>
<rect x="622" y="432" width="1" height="5" fill="#a6a6a6"/>
<text x="622.50" y="449.60" font-size="11.5" text-anchor="middle" fill="#d6d6d6" stroke="#d6d6d6" stroke-width="0.3" font-weight="normal" >50</text>
<rect x="656" y="432" width="1" height="5" fill="#a6a6a6"/>
<text x="656.50" y="449.60" font-size="11.5" text-anchor="middle" fill="#d6d6d6" stroke="#d6d6d6" stroke-width="0.3" font-weight="normal" >55</text>
<rect x="690" y="432" width="1" height="5" fill="#a6a6a6"/>
<text x="690.50" y="449.60" font-size="11.5" text-anchor="middle" fill="#d6d6d6" stroke="#d6d6d6" stroke-width="0.3" font-weight="normal" >60</text>
<rect x="723" y="432" width="1" height="5" fill="#a6a6a6"/>
<text x="723.50" y="449.60" font-size="11.5" text-anchor="middle" fill="#d6d6d6" stroke="#d6d6d6" stroke-width="0.3" font-weight="normal" >65</text>
<rect x="757" y="432" width="1" height="5" fill="#a6a6a6"/>
<text x="757.50" y="449.60" font-size="11.5" text-anchor="middle" fill="#d6d6d6" stroke="#d6d6d6" stroke-width="0.3" font-weight="normal" >70</text>
<rect x="790" y="432" width="1" height="5" fill="#a6a6a6"/>
<text x="790.50" y="449.60" font-size="11.5" text-anchor="middle" fill="#d6d6d6" stroke="#d6d6d6" stroke-width="0.3" font-weight="normal" >75</text>
<rect x="824" y="432" width="1" height="5" fill="#a6a6a6"/>
<text x="824.50" y="449.60" font-size="11.5" text-anchor="middle" fill="#d6d6d6" stroke="#d6d6d6" stroke-width="0.3" font-weight="normal" >80</text>
<rect x="857" y="432" width="1" height="5" fill="#a6a6a6"/>
<text x="857.50" y="449.60" font-size="11.5" text-anchor="middle" fill="#d6d6d6" stroke="#d6d6d6" stroke-width="0.3" font-weight="normal" >85</text>
<rect x="891" y="432" width="1" height="5" fill="#a6a6a6"/>
<text x="891.50" y="449.60" font-size="11.5" text-anchor="middle" fill="#d6d6d6" stroke="#d6d6d6" stroke-width="0.3" font-weight="normal" >90</text>
<rect x="924" y="432" width="1" height="5" fill="#a6a6a6"/>
<text x="924.50" y="449.60" font-size="11.5" text-anchor="middle" fill="#d6d6d6" stroke="#d6d6d6" stroke-width="0.3" font-weight="normal" >95</text>
<rect x="957" y="432" width="1" height="5" fill="#a6a6a6"/>
<text x="957.50" y="449.60" font-size="11.5" text-anchor="middle" fill="#d6d6d6" stroke="#d6d6d6" stroke-width="0.3" font-weight="normal" >100</text>
<rect x="288" y="265" width="670" height="1" fill="#9c9cc8"/>
<text x="587.50" y="256.50" font-size="15" text-anchor="middle" fill="#ececec" stroke="#ececec" stroke-width="0.0" font-weight="normal" textLength="207" lengthAdjust="spacingAndGlyphs">RGB Balance, with Luminance</text>
<rect x="646.5" y="371.5" width="92" height="23" fill="#eef0f8" stroke="#a0a0a0" stroke-width="1"/>
<text x="692.80" y="387.30" font-size="11" text-anchor="middle" fill="#555555" stroke="#555555" stroke-width="0" font-weight="normal" textLength="79" lengthAdjust="spacingAndGlyphs">With Luminance</text>
<rect x="998" y="22" width="277" height="269" fill="#222222"/>
<rect x="998" y="258" width="276" height="1" fill="#888888"/>
<rect x="998" y="224" width="276" height="1" fill="#888888"/>
<rect x="998" y="190" width="276" height="1" fill="#888888"/>
<rect x="998" y="157" width="276" height="1" fill="#888888"/>
<rect x="998" y="124" width="276" height="1" fill="#888888"/>
<rect x="998" y="90" width="276" height="1" fill="#888888"/>
<rect x="998" y="57" width="276" height="1" fill="#888888"/>
<clipPath id="c3"><rect x="999" y="23" width="275" height="267"/></clipPath>
<g clip-path="url(#c3)">
<path d="M998.50,290.50 L1208.88,34.70 L1273.50,34.70" fill="none" stroke="#f4f400" stroke-width="2.2"/>
<path d="M998.50,290.50 L1012.25,259.03 L1026.00,231.69 L1039.75,212.28 L1053.50,187.48 L1067.25,167.87 L1081.00,147.18 L1094.75,125.33 L1108.50,103.63 L1122.25,86.21 L1136.00,72.56 L1149.75,57.68 L1163.50,46.34 L1177.25,38.28 L1191.00,40.37 L1204.75,36.98 L1218.50,35.70 L1232.25,35.50 L1246.00,35.50 L1259.75,35.50 L1273.50,35.50" fill="none" stroke="#8c8c8c" stroke-width="2.2"/>
</g>
<rect x="998" y="22" width="277" height="1" fill="#a6a6a6"/>
<rect x="998" y="290" width="277" height="1" fill="#a6a6a6"/>
<rect x="998" y="22" width="1" height="269" fill="#a6a6a6"/>
<rect x="1274" y="22" width="1" height="269" fill="#a6a6a6"/>
<rect x="994" y="290" width="4" height="1" fill="#a6a6a6"/>
<text x="994.00" y="294.80" font-size="11.5" text-anchor="end" fill="#d6d6d6" stroke="#d6d6d6" stroke-width="0.3" font-weight="normal" >0</text>
<rect x="994" y="258" width="4" height="1" fill="#a6a6a6"/>
<text x="994.00" y="262.80" font-size="11.5" text-anchor="end" fill="#d6d6d6" stroke="#d6d6d6" stroke-width="0.3" font-weight="normal" >0,1</text>
<rect x="994" y="224" width="4" height="1" fill="#a6a6a6"/>
<text x="994.00" y="228.80" font-size="11.5" text-anchor="end" fill="#d6d6d6" stroke="#d6d6d6" stroke-width="0.3" font-weight="normal" >0,2</text>
<rect x="994" y="190" width="4" height="1" fill="#a6a6a6"/>
<text x="994.00" y="194.80" font-size="11.5" text-anchor="end" fill="#d6d6d6" stroke="#d6d6d6" stroke-width="0.3" font-weight="normal" >0,3</text>
<rect x="994" y="157" width="4" height="1" fill="#a6a6a6"/>
<text x="994.00" y="161.80" font-size="11.5" text-anchor="end" fill="#d6d6d6" stroke="#d6d6d6" stroke-width="0.3" font-weight="normal" >0,4</text>
<rect x="994" y="124" width="4" height="1" fill="#a6a6a6"/>
<text x="994.00" y="128.80" font-size="11.5" text-anchor="end" fill="#d6d6d6" stroke="#d6d6d6" stroke-width="0.3" font-weight="normal" >0,5</text>
<rect x="994" y="90" width="4" height="1" fill="#a6a6a6"/>
<text x="994.00" y="94.80" font-size="11.5" text-anchor="end" fill="#d6d6d6" stroke="#d6d6d6" stroke-width="0.3" font-weight="normal" >0,6</text>
<rect x="994" y="57" width="4" height="1" fill="#a6a6a6"/>
<text x="994.00" y="61.80" font-size="11.5" text-anchor="end" fill="#d6d6d6" stroke="#d6d6d6" stroke-width="0.3" font-weight="normal" >0,7</text>
<rect x="994" y="22" width="4" height="1" fill="#a6a6a6"/>
<text x="994.00" y="26.80" font-size="11.5" text-anchor="end" fill="#d6d6d6" stroke="#d6d6d6" stroke-width="0.3" font-weight="normal" >0,8</text>
<rect x="998" y="290" width="1" height="5" fill="#a6a6a6"/>
<text x="998.50" y="307.30" font-size="11.5" text-anchor="middle" fill="#d6d6d6" stroke="#d6d6d6" stroke-width="0.3" font-weight="normal" >0</text>
<rect x="1053" y="290" width="1" height="5" fill="#a6a6a6"/>
<text x="1053.50" y="307.30" font-size="11.5" text-anchor="middle" fill="#d6d6d6" stroke="#d6d6d6" stroke-width="0.3" font-weight="normal" >20</text>
<rect x="1108" y="290" width="1" height="5" fill="#a6a6a6"/>
<text x="1108.50" y="307.30" font-size="11.5" text-anchor="middle" fill="#d6d6d6" stroke="#d6d6d6" stroke-width="0.3" font-weight="normal" >40</text>
<rect x="1164" y="290" width="1" height="5" fill="#a6a6a6"/>
<text x="1164.50" y="307.30" font-size="11.5" text-anchor="middle" fill="#d6d6d6" stroke="#d6d6d6" stroke-width="0.3" font-weight="normal" >60</text>
<rect x="1219" y="290" width="1" height="5" fill="#a6a6a6"/>
<text x="1219.50" y="307.30" font-size="11.5" text-anchor="middle" fill="#d6d6d6" stroke="#d6d6d6" stroke-width="0.3" font-weight="normal" >80</text>
<rect x="1273" y="290" width="1" height="5" fill="#a6a6a6"/>
<text x="1273.50" y="307.30" font-size="11.5" text-anchor="middle" fill="#d6d6d6" stroke="#d6d6d6" stroke-width="0.3" font-weight="normal" >100</text>
<text x="1127.00" y="19.00" font-size="11" text-anchor="middle" fill="#d6d6d6" stroke="#d6d6d6" stroke-width="0.12" font-weight="normal" textLength="25" lengthAdjust="spacingAndGlyphs">EOTF</text>
<rect x="1008" y="333" width="267" height="269" fill="#222222"/>
<rect x="1008" y="553" width="266" height="1" fill="#888888"/>
<rect x="1008" y="504" width="266" height="1" fill="#888888"/>
<rect x="1008" y="456" width="266" height="1" fill="#888888"/>
<rect x="1008" y="407" width="266" height="1" fill="#888888"/>
<rect x="1008" y="359" width="266" height="1" fill="#888888"/>
<clipPath id="c4"><rect x="1009" y="333" width="265" height="268"/></clipPath>
<g clip-path="url(#c4)">
<path d="M1008.50,601.50 L1021.75,601.49 L1035.00,601.42 L1048.25,601.26 L1061.50,600.91 L1074.75,600.24 L1088.00,599.05 L1101.25,596.99 L1114.50,593.57 L1127.75,587.97 L1141.00,578.95 L1154.25,564.59 L1167.50,541.86 L1180.75,506.06 L1194.00,449.74 L1207.25,361.14 L1212.29,334.33 L1273.50,334.33" fill="none" stroke="#f4f400" stroke-width="2.4" stroke-linejoin="round"/>
<path d="M1008.50,601.50 L1021.75,601.43 L1035.00,601.11 L1048.25,600.51 L1061.50,598.81 L1074.75,596.09 L1088.00,590.80 L1101.25,580.49 L1114.50,561.67 L1127.75,536.00 L1141.00,505.43 L1154.25,456.30 L1167.50,403.06 L1180.75,353.93 L1194.00,367.73 L1207.25,344.98 L1220.50,335.78 L1233.75,334.33 L1247.00,334.33 L1260.25,334.33 L1273.50,334.33" fill="none" stroke="#8c8c8c" stroke-width="2.2"/>
</g>
<rect x="1008" y="333" width="267" height="1" fill="#a6a6a6"/>
<rect x="1008" y="601" width="267" height="1" fill="#a6a6a6"/>
<rect x="1008" y="333" width="1" height="269" fill="#a6a6a6"/>
<rect x="1274" y="333" width="1" height="269" fill="#a6a6a6"/>
<rect x="1004" y="601" width="4" height="1" fill="#a6a6a6"/>
<text x="1004.00" y="605.80" font-size="11.5" text-anchor="end" fill="#d6d6d6" stroke="#d6d6d6" stroke-width="0.3" font-weight="normal" >0</text>
<rect x="1004" y="553" width="4" height="1" fill="#a6a6a6"/>
<text x="1004.00" y="557.80" font-size="11.5" text-anchor="end" fill="#d6d6d6" stroke="#d6d6d6" stroke-width="0.3" font-weight="normal" >200</text>
<rect x="1004" y="504" width="4" height="1" fill="#a6a6a6"/>
<text x="1004.00" y="508.80" font-size="11.5" text-anchor="end" fill="#d6d6d6" stroke="#d6d6d6" stroke-width="0.3" font-weight="normal" >400</text>
<rect x="1004" y="456" width="4" height="1" fill="#a6a6a6"/>
<text x="1004.00" y="460.80" font-size="11.5" text-anchor="end" fill="#d6d6d6" stroke="#d6d6d6" stroke-width="0.3" font-weight="normal" >600</text>
<rect x="1004" y="407" width="4" height="1" fill="#a6a6a6"/>
<text x="1004.00" y="411.80" font-size="11.5" text-anchor="end" fill="#d6d6d6" stroke="#d6d6d6" stroke-width="0.3" font-weight="normal" >800</text>
<rect x="1004" y="359" width="4" height="1" fill="#a6a6a6"/>
<text x="1004.00" y="363.80" font-size="11.5" text-anchor="end" fill="#d6d6d6" stroke="#d6d6d6" stroke-width="0.3" font-weight="normal" >1000</text>
<rect x="1008" y="601" width="1" height="5" fill="#a6a6a6"/>
<text x="1008.50" y="618.30" font-size="11.5" text-anchor="middle" fill="#d6d6d6" stroke="#d6d6d6" stroke-width="0.3" font-weight="normal" >0</text>
<rect x="1061" y="601" width="1" height="5" fill="#a6a6a6"/>
<text x="1061.50" y="618.30" font-size="11.5" text-anchor="middle" fill="#d6d6d6" stroke="#d6d6d6" stroke-width="0.3" font-weight="normal" >20</text>
<rect x="1114" y="601" width="1" height="5" fill="#a6a6a6"/>
<text x="1114.50" y="618.30" font-size="11.5" text-anchor="middle" fill="#d6d6d6" stroke="#d6d6d6" stroke-width="0.3" font-weight="normal" >40</text>
<rect x="1168" y="601" width="1" height="5" fill="#a6a6a6"/>
<text x="1168.50" y="618.30" font-size="11.5" text-anchor="middle" fill="#d6d6d6" stroke="#d6d6d6" stroke-width="0.3" font-weight="normal" >60</text>
<rect x="1221" y="601" width="1" height="5" fill="#a6a6a6"/>
<text x="1221.50" y="618.30" font-size="11.5" text-anchor="middle" fill="#d6d6d6" stroke="#d6d6d6" stroke-width="0.3" font-weight="normal" >80</text>
<rect x="1273" y="601" width="1" height="5" fill="#a6a6a6"/>
<text x="1273.50" y="618.30" font-size="11.5" text-anchor="middle" fill="#d6d6d6" stroke="#d6d6d6" stroke-width="0.3" font-weight="normal" >100</text>
<text x="1126.50" y="330.00" font-size="11" text-anchor="middle" fill="#d6d6d6" stroke="#d6d6d6" stroke-width="0.12" font-weight="normal" textLength="55" lengthAdjust="spacingAndGlyphs">Luminance</text>
<text x="9.00" y="484.00" font-size="15" text-anchor="start" fill="#ececec" stroke="#ececec" stroke-width="0.0" font-weight="normal" textLength="117" lengthAdjust="spacingAndGlyphs">Current Reading:</text>
<text x="9.00" y="515.00" font-size="20" text-anchor="start" fill="#ececec" stroke="#ececec" stroke-width="0.0" font-weight="normal" textLength="79" lengthAdjust="spacingAndGlyphs">x: 0,3333</text>
<text x="9.00" y="546.00" font-size="20" text-anchor="start" fill="#ececec" stroke="#ececec" stroke-width="0.0" font-weight="normal" textLength="79" lengthAdjust="spacingAndGlyphs">y: 0,3333</text>
<text x="9.00" y="578.00" font-size="20" text-anchor="start" fill="#ececec" stroke="#ececec" stroke-width="0.0" font-weight="normal" textLength="37" lengthAdjust="spacingAndGlyphs">fL: 0</text>
<text x="9.00" y="609.00" font-size="20" text-anchor="start" fill="#ececec" stroke="#ececec" stroke-width="0.0" font-weight="normal" textLength="74" lengthAdjust="spacingAndGlyphs">cd/m²: 0</text>
<rect x="764" y="466" width="195" height="140" fill="#222222"/>
<rect x="764" y="591" width="194" height="1" fill="#888888"/>
<rect x="764" y="564" width="194" height="1" fill="#888888"/>
<rect x="764" y="535" width="194" height="1" fill="#888888"/>
<rect x="764" y="508" width="194" height="1" fill="#888888"/>
<rect x="764" y="479" width="194" height="1" fill="#888888"/>
<rect x="783" y="536" width="155" height="69" fill="#000"/>
<rect x="784" y="537" width="50" height="68" fill="url(#gR)"/>
<rect x="836" y="537" width="49" height="68" fill="url(#gG)"/>
<rect x="887" y="537" width="50" height="68" fill="url(#gB)"/>
<rect x="764" y="466" width="195" height="1" fill="#a6a6a6"/>
<rect x="764" y="605" width="195" height="1" fill="#a6a6a6"/>
<rect x="764" y="466" width="1" height="140" fill="#a6a6a6"/>
<rect x="958" y="466" width="1" height="140" fill="#a6a6a6"/>
<rect x="760" y="591" width="4" height="1" fill="#a6a6a6"/>
<text x="760.00" y="595.80" font-size="11.5" text-anchor="end" fill="#d6d6d6" stroke="#d6d6d6" stroke-width="0.3" font-weight="normal" >96</text>
<rect x="760" y="564" width="4" height="1" fill="#a6a6a6"/>
<text x="760.00" y="568.80" font-size="11.5" text-anchor="end" fill="#d6d6d6" stroke="#d6d6d6" stroke-width="0.3" font-weight="normal" >98</text>
<rect x="760" y="535" width="4" height="1" fill="#a6a6a6"/>
<text x="760.00" y="539.80" font-size="11.5" text-anchor="end" fill="#d6d6d6" stroke="#d6d6d6" stroke-width="0.3" font-weight="normal" >100</text>
<rect x="760" y="508" width="4" height="1" fill="#a6a6a6"/>
<text x="760.00" y="512.80" font-size="11.5" text-anchor="end" fill="#d6d6d6" stroke="#d6d6d6" stroke-width="0.3" font-weight="normal" >102</text>
<rect x="760" y="479" width="4" height="1" fill="#a6a6a6"/>
<text x="760.00" y="483.80" font-size="11.5" text-anchor="end" fill="#d6d6d6" stroke="#d6d6d6" stroke-width="0.3" font-weight="normal" >104</text>
<rect x="764" y="605" width="1" height="5" fill="#a6a6a6"/>
<rect x="958" y="605" width="1" height="5" fill="#a6a6a6"/>
<text x="861.00" y="617.80" font-size="11.5" text-anchor="middle" fill="#d6d6d6" stroke="#d6d6d6" stroke-width="0.3" font-weight="normal" >0</text>
<rect x="188" y="457" width="543" height="156" fill="#000"/>
<rect x="189" y="458" width="541" height="11" fill="#2e2e2e"/>
<rect x="189" y="469" width="541" height="11" fill="#141414"/>
<clipPath id="ct"><rect x="189" y="458" width="541" height="155"/></clipPath>
<g clip-path="url(#ct)">
<text x="310.75" y="473.00" font-size="10.5" text-anchor="middle" fill="#f0f0f0" stroke="#f0f0f0" stroke-width="0.0" font-weight="bold" >0</text>
<text x="347.35" y="473.00" font-size="10.5" text-anchor="middle" fill="#f0f0f0" stroke="#f0f0f0" stroke-width="0.0" font-weight="bold" >5</text>
<text x="383.65" y="473.00" font-size="10.5" text-anchor="middle" fill="#f0f0f0" stroke="#f0f0f0" stroke-width="0.0" font-weight="bold" >10</text>
<text x="420.20" y="473.00" font-size="10.5" text-anchor="middle" fill="#f0f0f0" stroke="#f0f0f0" stroke-width="0.0" font-weight="bold" >15</text>
<text x="460.10" y="473.00" font-size="10.5" text-anchor="middle" fill="#f0f0f0" stroke="#f0f0f0" stroke-width="0.0" font-weight="bold" >20</text>
<text x="502.80" y="473.00" font-size="10.5" text-anchor="middle" fill="#f0f0f0" stroke="#f0f0f0" stroke-width="0.0" font-weight="bold" >25</text>
<text x="546.05" y="473.00" font-size="10.5" text-anchor="middle" fill="#f0f0f0" stroke="#f0f0f0" stroke-width="0.0" font-weight="bold" >30</text>
<text x="589.65" y="473.00" font-size="10.5" text-anchor="middle" fill="#f0f0f0" stroke="#f0f0f0" stroke-width="0.0" font-weight="bold" >35</text>
<text x="636.10" y="473.00" font-size="10.5" text-anchor="middle" fill="#f0f0f0" stroke="#f0f0f0" stroke-width="0.0" font-weight="bold" >40</text>
<text x="685.80" y="473.00" font-size="10.5" text-anchor="middle" fill="#f0f0f0" stroke="#f0f0f0" stroke-width="0.0" font-weight="bold" >45</text>
<rect x="189" y="480" width="541" height="20" fill="#474747"/>
<text x="198.00" y="495.00" font-size="12" text-anchor="start" fill="#f4f4f4" stroke="#f4f4f4" stroke-width="0.0" font-weight="bold" >Y</text>
<text x="296.00" y="495.00" font-size="12" text-anchor="start" fill="#eeeeee" stroke="#eeeeee" stroke-width="0.3" font-weight="normal" >0,000</text>
<text x="332.50" y="495.00" font-size="12" text-anchor="start" fill="#eeeeee" stroke="#eeeeee" stroke-width="0.3" font-weight="normal" >0,277</text>
<text x="369.20" y="495.00" font-size="12" text-anchor="start" fill="#eeeeee" stroke="#eeeeee" stroke-width="0.3" font-weight="normal" >1,618</text>
<text x="405.10" y="495.00" font-size="12" text-anchor="start" fill="#eeeeee" stroke="#eeeeee" stroke-width="0.3" font-weight="normal" >4,092</text>
<text x="442.30" y="495.00" font-size="12" text-anchor="start" fill="#eeeeee" stroke="#eeeeee" stroke-width="0.3" font-weight="normal" >11,117</text>
<text x="484.90" y="495.00" font-size="12" text-anchor="start" fill="#eeeeee" stroke="#eeeeee" stroke-width="0.3" font-weight="normal" >22,369</text>
<text x="527.70" y="495.00" font-size="12" text-anchor="start" fill="#eeeeee" stroke="#eeeeee" stroke-width="0.3" font-weight="normal" >44,196</text>
<text x="571.40" y="495.00" font-size="12" text-anchor="start" fill="#eeeeee" stroke="#eeeeee" stroke-width="0.3" font-weight="normal" >86,832</text>
<text x="614.90" y="495.00" font-size="12" text-anchor="start" fill="#eeeeee" stroke="#eeeeee" stroke-width="0.3" font-weight="normal" >164,567</text>
<text x="664.30" y="495.00" font-size="12" text-anchor="start" fill="#eeeeee" stroke="#eeeeee" stroke-width="0.3" font-weight="normal" >270,654</text>
<text x="714.30" y="495.00" font-size="12" text-anchor="start" fill="#eeeeee" stroke="#eeeeee" stroke-width="0.3" font-weight="normal" >397,</text>
<rect x="189" y="500" width="541" height="20" fill="#8a8a8a"/>
<text x="198.00" y="515.00" font-size="12" text-anchor="start" fill="#f4f4f4" stroke="#f4f4f4" stroke-width="0.0" font-weight="bold" >x: CIE31</text>
<text x="296.00" y="515.00" font-size="12" text-anchor="start" fill="#eeeeee" stroke="#eeeeee" stroke-width="0.3" font-weight="normal" >0,333</text>
<text x="332.50" y="515.00" font-size="12" text-anchor="start" fill="#eeeeee" stroke="#eeeeee" stroke-width="0.3" font-weight="normal" >0,279</text>
<text x="369.20" y="515.00" font-size="12" text-anchor="start" fill="#eeeeee" stroke="#eeeeee" stroke-width="0.3" font-weight="normal" >0,277</text>
<text x="405.10" y="515.00" font-size="12" text-anchor="start" fill="#eeeeee" stroke="#eeeeee" stroke-width="0.3" font-weight="normal" >0,278</text>
<text x="442.30" y="515.00" font-size="12" text-anchor="start" fill="#eeeeee" stroke="#eeeeee" stroke-width="0.3" font-weight="normal" >0,281</text>
<text x="484.90" y="515.00" font-size="12" text-anchor="start" fill="#eeeeee" stroke="#eeeeee" stroke-width="0.3" font-weight="normal" >0,280</text>
<text x="527.70" y="515.00" font-size="12" text-anchor="start" fill="#eeeeee" stroke="#eeeeee" stroke-width="0.3" font-weight="normal" >0,281</text>
<text x="571.40" y="515.00" font-size="12" text-anchor="start" fill="#eeeeee" stroke="#eeeeee" stroke-width="0.3" font-weight="normal" >0,281</text>
<text x="614.90" y="515.00" font-size="12" text-anchor="start" fill="#eeeeee" stroke="#eeeeee" stroke-width="0.3" font-weight="normal" >0,281</text>
<text x="664.30" y="515.00" font-size="12" text-anchor="start" fill="#eeeeee" stroke="#eeeeee" stroke-width="0.3" font-weight="normal" >0,281</text>
<text x="714.30" y="515.00" font-size="12" text-anchor="start" fill="#eeeeee" stroke="#eeeeee" stroke-width="0.3" font-weight="normal" >0,2</text>
<rect x="189" y="520" width="541" height="20" fill="#474747"/>
<text x="198.00" y="535.00" font-size="12" text-anchor="start" fill="#f4f4f4" stroke="#f4f4f4" stroke-width="0.0" font-weight="bold" >y: CIE31</text>
<text x="296.00" y="535.00" font-size="12" text-anchor="start" fill="#eeeeee" stroke="#eeeeee" stroke-width="0.3" font-weight="normal" >0,333</text>
<text x="332.50" y="535.00" font-size="12" text-anchor="start" fill="#eeeeee" stroke="#eeeeee" stroke-width="0.3" font-weight="normal" >0,283</text>
<text x="369.20" y="535.00" font-size="12" text-anchor="start" fill="#eeeeee" stroke="#eeeeee" stroke-width="0.3" font-weight="normal" >0,281</text>
<text x="405.10" y="535.00" font-size="12" text-anchor="start" fill="#eeeeee" stroke="#eeeeee" stroke-width="0.3" font-weight="normal" >0,282</text>
<text x="442.30" y="535.00" font-size="12" text-anchor="start" fill="#eeeeee" stroke="#eeeeee" stroke-width="0.3" font-weight="normal" >0,285</text>
<text x="484.90" y="535.00" font-size="12" text-anchor="start" fill="#eeeeee" stroke="#eeeeee" stroke-width="0.3" font-weight="normal" >0,283</text>
<text x="527.70" y="535.00" font-size="12" text-anchor="start" fill="#eeeeee" stroke="#eeeeee" stroke-width="0.3" font-weight="normal" >0,284</text>
<text x="571.40" y="535.00" font-size="12" text-anchor="start" fill="#eeeeee" stroke="#eeeeee" stroke-width="0.3" font-weight="normal" >0,283</text>
<text x="614.90" y="535.00" font-size="12" text-anchor="start" fill="#eeeeee" stroke="#eeeeee" stroke-width="0.3" font-weight="normal" >0,284</text>
<text x="664.30" y="535.00" font-size="12" text-anchor="start" fill="#eeeeee" stroke="#eeeeee" stroke-width="0.3" font-weight="normal" >0,284</text>
<text x="714.30" y="535.00" font-size="12" text-anchor="start" fill="#eeeeee" stroke="#eeeeee" stroke-width="0.3" font-weight="normal" >0,2</text>
<rect x="189" y="540" width="541" height="20" fill="#8a8a8a"/>
<text x="198.00" y="555.00" font-size="12" text-anchor="start" fill="#f4f4f4" stroke="#f4f4f4" stroke-width="0.0" font-weight="bold" >Target Y</text>
<text x="296.00" y="555.00" font-size="12" text-anchor="start" fill="#eeeeee" stroke="#eeeeee" stroke-width="0.3" font-weight="normal" >0,000</text>
<text x="332.50" y="555.00" font-size="12" text-anchor="start" fill="#eeeeee" stroke="#eeeeee" stroke-width="0.3" font-weight="normal" >0,061</text>
<text x="369.20" y="555.00" font-size="12" text-anchor="start" fill="#eeeeee" stroke="#eeeeee" stroke-width="0.3" font-weight="normal" >0,328</text>
<text x="405.10" y="555.00" font-size="12" text-anchor="start" fill="#eeeeee" stroke="#eeeeee" stroke-width="0.3" font-weight="normal" >1,015</text>
<text x="442.30" y="555.00" font-size="12" text-anchor="start" fill="#eeeeee" stroke="#eeeeee" stroke-width="0.3" font-weight="normal" >2,465</text>
<text x="484.90" y="555.00" font-size="12" text-anchor="start" fill="#eeeeee" stroke="#eeeeee" stroke-width="0.3" font-weight="normal" >5,238</text>
<text x="527.70" y="555.00" font-size="12" text-anchor="start" fill="#eeeeee" stroke="#eeeeee" stroke-width="0.3" font-weight="normal" >10,214</text>
<text x="571.40" y="555.00" font-size="12" text-anchor="start" fill="#eeeeee" stroke="#eeeeee" stroke-width="0.3" font-weight="normal" >18,781</text>
<text x="614.90" y="555.00" font-size="12" text-anchor="start" fill="#eeeeee" stroke="#eeeeee" stroke-width="0.3" font-weight="normal" >33,104</text>
<text x="664.30" y="555.00" font-size="12" text-anchor="start" fill="#eeeeee" stroke="#eeeeee" stroke-width="0.3" font-weight="normal" >56,554</text>
<text x="714.30" y="555.00" font-size="12" text-anchor="start" fill="#eeeeee" stroke="#eeeeee" stroke-width="0.3" font-weight="normal" >94,</text>
<rect x="189" y="560" width="541" height="20" fill="#474747"/>
<text x="198.00" y="575.00" font-size="12" text-anchor="start" fill="#f4f4f4" stroke="#f4f4f4" stroke-width="0.0" font-weight="bold" >Target x:CIE31</text>
<text x="296.00" y="575.00" font-size="12" text-anchor="start" fill="#eeeeee" stroke="#eeeeee" stroke-width="0.3" font-weight="normal" >0,313</text>
<text x="332.50" y="575.00" font-size="12" text-anchor="start" fill="#eeeeee" stroke="#eeeeee" stroke-width="0.3" font-weight="normal" >0,313</text>
<text x="369.20" y="575.00" font-size="12" text-anchor="start" fill="#eeeeee" stroke="#eeeeee" stroke-width="0.3" font-weight="normal" >0,313</text>
<text x="405.10" y="575.00" font-size="12" text-anchor="start" fill="#eeeeee" stroke="#eeeeee" stroke-width="0.3" font-weight="normal" >0,313</text>
<text x="442.30" y="575.00" font-size="12" text-anchor="start" fill="#eeeeee" stroke="#eeeeee" stroke-width="0.3" font-weight="normal" >0,313</text>
<text x="484.90" y="575.00" font-size="12" text-anchor="start" fill="#eeeeee" stroke="#eeeeee" stroke-width="0.3" font-weight="normal" >0,313</text>
<text x="527.70" y="575.00" font-size="12" text-anchor="start" fill="#eeeeee" stroke="#eeeeee" stroke-width="0.3" font-weight="normal" >0,313</text>
<text x="571.40" y="575.00" font-size="12" text-anchor="start" fill="#eeeeee" stroke="#eeeeee" stroke-width="0.3" font-weight="normal" >0,313</text>
<text x="614.90" y="575.00" font-size="12" text-anchor="start" fill="#eeeeee" stroke="#eeeeee" stroke-width="0.3" font-weight="normal" >0,313</text>
<text x="664.30" y="575.00" font-size="12" text-anchor="start" fill="#eeeeee" stroke="#eeeeee" stroke-width="0.3" font-weight="normal" >0,313</text>
<text x="714.30" y="575.00" font-size="12" text-anchor="start" fill="#eeeeee" stroke="#eeeeee" stroke-width="0.3" font-weight="normal" >0,3</text>
<rect x="189" y="580" width="541" height="20" fill="#8a8a8a"/>
<text x="198.00" y="595.00" font-size="12" text-anchor="start" fill="#f4f4f4" stroke="#f4f4f4" stroke-width="0.0" font-weight="bold" >Target y:CIE31</text>
<text x="296.00" y="595.00" font-size="12" text-anchor="start" fill="#eeeeee" stroke="#eeeeee" stroke-width="0.3" font-weight="normal" >0,329</text>
<text x="332.50" y="595.00" font-size="12" text-anchor="start" fill="#eeeeee" stroke="#eeeeee" stroke-width="0.3" font-weight="normal" >0,329</text>
<text x="369.20" y="595.00" font-size="12" text-anchor="start" fill="#eeeeee" stroke="#eeeeee" stroke-width="0.3" font-weight="normal" >0,329</text>
<text x="405.10" y="595.00" font-size="12" text-anchor="start" fill="#eeeeee" stroke="#eeeeee" stroke-width="0.3" font-weight="normal" >0,329</text>
<text x="442.30" y="595.00" font-size="12" text-anchor="start" fill="#eeeeee" stroke="#eeeeee" stroke-width="0.3" font-weight="normal" >0,329</text>
<text x="484.90" y="595.00" font-size="12" text-anchor="start" fill="#eeeeee" stroke="#eeeeee" stroke-width="0.3" font-weight="normal" >0,329</text>
<text x="527.70" y="595.00" font-size="12" text-anchor="start" fill="#eeeeee" stroke="#eeeeee" stroke-width="0.3" font-weight="normal" >0,329</text>
<text x="571.40" y="595.00" font-size="12" text-anchor="start" fill="#eeeeee" stroke="#eeeeee" stroke-width="0.3" font-weight="normal" >0,329</text>
<text x="614.90" y="595.00" font-size="12" text-anchor="start" fill="#eeeeee" stroke="#eeeeee" stroke-width="0.3" font-weight="normal" >0,329</text>
<text x="664.30" y="595.00" font-size="12" text-anchor="start" fill="#eeeeee" stroke="#eeeeee" stroke-width="0.3" font-weight="normal" >0,329</text>
<text x="714.30" y="595.00" font-size="12" text-anchor="start" fill="#eeeeee" stroke="#eeeeee" stroke-width="0.3" font-weight="normal" >0,3</text>
<rect x="189" y="600" width="541" height="13" fill="#5f5f5f"/>
<rect x="203.5" y="601" width="247" height="11" rx="5.5" fill="#474747"/>
<rect x="189" y="601" width="12" height="11.5" rx="2" fill="#8a8a8a"/>
<path d="M192.5,606.8 L197,602.8 L197,610.8 Z" fill="#3a3a3a"/>
<rect x="718" y="601" width="11.5" height="11.5" rx="2" fill="#858585"/>
<path d="M726,606.8 L722,602.8 L722,610.8 Z" fill="#3a3a3a"/>
</g>
</svg></body></html>
